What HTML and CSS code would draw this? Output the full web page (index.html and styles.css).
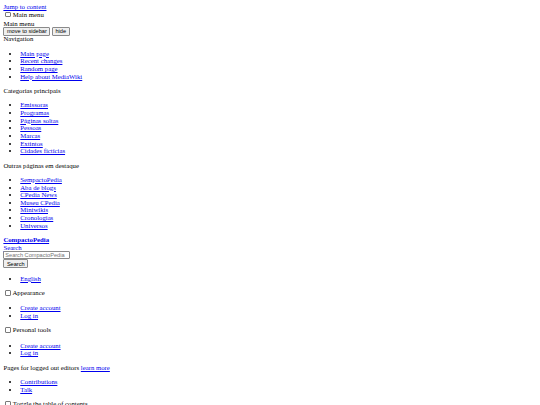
FILE: index.html
```html
<!DOCTYPE html>
<html lang="pt">
<head>
<meta charset="utf-8">
<title>CompactoPedia</title>
<link rel="stylesheet" href="styles.css">
</head>
<body class="page">
<a class="link" href="#content">Jump to content</a>
<div class="menu">
  <div class="check-row"><input class="check" type="checkbox" id="mm"> <label for="mm">Main menu</label></div>
  <div>Main menu</div>
  <div class="btn-row"><button class="btn">move to sidebar</button> <button class="btn">hide</button></div>
  <div>Navigation</div>
  <ul class="list">
    <li><a class="link" href="#">Main page</a></li>
    <li><a class="link" href="#">Recent changes</a></li>
    <li><a class="link" href="#">Random page</a></li>
    <li><a class="link" href="#">Help about MediaWiki</a></li>
  </ul>
  <div>Categorias principais</div>
  <ul class="list">
    <li><a class="link" href="#">Emissoras</a></li>
    <li><a class="link" href="#">Programas</a></li>
    <li><a class="link" href="#">Páginas soltas</a></li>
    <li><a class="link" href="#">Pessoas</a></li>
    <li><a class="link" href="#">Marcas</a></li>
    <li><a class="link" href="#">Extintos</a></li>
    <li><a class="link" href="#">Cidades fictícias</a></li>
  </ul>
  <div>Outras páginas em destaque</div>
  <ul class="list">
    <li><a class="link" href="#">SempactoPedia</a></li>
    <li><a class="link" href="#">Aba de blogs</a></li>
    <li><a class="link" href="#">CPedia News</a></li>
    <li><a class="link" href="#">Museu CPedia</a></li>
    <li><a class="link" href="#">Miniwikis</a></li>
    <li><a class="link" href="#">Cronologias</a></li>
    <li><a class="link" href="#">Universos</a></li>
  </ul>
</div>
<div><a class="link logo" href="#">CompactoPedia</a></div>
<div><a class="link" href="#">Search</a></div>
<form class="search">
  <div class="field-row"><input class="field" type="text" placeholder="Search CompactoPedia"></div>
  <div class="btn-row btn-row-search"><button class="btn" type="button">Search</button></div>
</form>
<ul class="list">
  <li><a class="link" href="#">English</a></li>
</ul>
<div class="check-row"><input class="check" type="checkbox" id="ap"> <label for="ap">Appearance</label></div>
<ul class="list">
  <li><a class="link" href="#">Create account</a></li>
  <li><a class="link" href="#">Log in</a></li>
</ul>
<div class="check-row"><input class="check" type="checkbox" id="pt"> <label for="pt">Personal tools</label></div>
<ul class="list">
  <li><a class="link" href="#">Create account</a></li>
  <li><a class="link" href="#">Log in</a></li>
</ul>
<div>Pages for logged out editors <a class="link" href="#">learn more</a></div>
<ul class="list">
  <li><a class="link" href="#">Contributions</a></li>
  <li><a class="link" href="#">Talk</a></li>
</ul>
<div class="check-row" id="content"><input class="check" type="checkbox" id="toc"> <label for="toc">Toggle the table of contents</label></div>
</body>
</html>
```
FILE: styles.css
```css
html {
  background: #ffffff;
  overflow: hidden;
}
.page {
  margin: 3.375px;
  font-family: "Liberation Serif", "Times New Roman", serif;
  font-size: 6.75px;
  line-height: 7.62px;
  color: #000000;
}
.link {
  color: #0000ee;
  text-decoration: underline;
  text-decoration-thickness: 0.5px;
}
.logo {
  font-weight: bold;
}
.list {
  margin: 6.75px 0;
  padding-left: 16.875px;
  list-style: disc;
}
.check-row {
  height: 8.5px;
  line-height: 8.5px;
}
.check {
  appearance: none;
  -webkit-appearance: none;
  display: inline-block;
  box-sizing: border-box;
  width: 5.5px;
  height: 5.5px;
  margin: 0 0.6px -0.4px 1.7px;
  border: 0.6px solid #7a7a7a;
  border-radius: 1px;
  background: #ffffff;
  vertical-align: baseline;
}
.btn-row {
  height: 8.3px;
  display: flex;
  align-items: center;
  gap: 1.7px;
}
.btn-row-search {
  height: 8.8px;
}
.field-row {
  height: 8px;
  display: flex;
  align-items: center;
}
.btn {
  font-family: "Liberation Sans", Arial, sans-serif;
  font-size: 5.625px;
  line-height: 6.2px;
  padding: 0.4px 2.5px;
  margin: 0;
  border: 0.6px solid #8a8a8a;
  border-radius: 1px;
  background: #efefef;
  color: #000000;
}
.field {
  box-sizing: border-box;
  width: 67px;
  height: 8px;
  font-family: "Liberation Sans", Arial, sans-serif;
  font-size: 5.625px;
  padding: 0 0.9px;
  margin: 0;
  border: 0.6px solid #8a8a8a;
  border-radius: 1px;
  background: #ffffff;
}
.field::placeholder {
  color: #757575;
}
.search {
  margin: 0;
}
```
